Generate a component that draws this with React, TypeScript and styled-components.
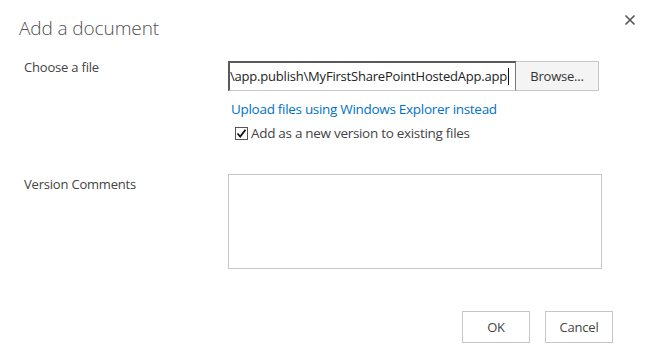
import React from "react"
import styled, { createGlobalStyle } from "styled-components"

const GlobalStyle = createGlobalStyle`
  html, body {
    margin: 0;
    padding: 0;
    background: #ffffff;
  }
  body {
    font-family: "Open Sans", "Noto Sans", "Liberation Sans", sans-serif;
    color: #444444;
  }
`

const Dialog = styled.div`
  width: 650px;
  height: 350px;
  box-sizing: border-box;
  padding: 0 37px 0 24px;
  background: #ffffff;
`

const Header = styled.div`
  display: flex;
  align-items: flex-start;
  justify-content: space-between;
  margin-right: -23px;
  padding-top: 10px;
  height: 51px;
  box-sizing: border-box;
`

const Title = styled.h1`
  margin: 5px 0 0 -5px;
  font-size: 19px;
  line-height: 26px;
  font-weight: 300;
  color: #505050;
  letter-spacing: -0.1px;
`

const CloseButton = styled.button`
  border: none;
  background: transparent;
  padding: 0;
  margin-top: 4px;
  width: 12px;
  height: 12px;
  display: flex;
  cursor: pointer;
`

const FormRow = styled.div<{ $gap?: number }>`
  display: grid;
  grid-template-columns: 204px 1fr;
  margin-top: ${p => p.$gap ?? 0}px;
`

const Label = styled.div<{ $offset?: number }>`
  font-size: 13px;
  line-height: 18px;
  color: #444444;
  padding-top: ${p => p.$offset ?? 0}px;
  letter-spacing: -0.2px;
`

const Field = styled.div`
  display: flex;
  flex-direction: column;
  align-items: flex-start;
`

const FileGroup = styled.div`
  display: flex;
  height: 30px;
  width: 371px;
  margin-top: 10px;
`

const FileBox = styled.div`
  flex: 0 0 288px;
  box-sizing: border-box;
  border-top: 2px solid #5a5a5a;
  border-left: 2px solid #5a5a5a;
  border-bottom: 1px solid #c8c8c8;
  border-right: 1px solid #7a7a7a;
  background: #ffffff;
  font-size: 13px;
  line-height: 26px;
  color: #222222;
  white-space: nowrap;
  overflow: hidden;
  letter-spacing: -0.2px;
`

const Caret = styled.span`
  display: inline-block;
  width: 1px;
  height: 17px;
  margin-left: 1px;
  background: #111111;
  vertical-align: -4px;
`

const BrowseButton = styled.button`
  flex: 1;
  box-sizing: border-box;
  border: 1px solid #c6c6c6;
  border-left: none;
  background: #f4f4f4;
  font-family: inherit;
  font-size: 13px;
  color: #333333;
  padding: 0;
  letter-spacing: -0.2px;
`

const Link = styled.a`
  margin-top: 9px;
  margin-left: 3px;
  font-size: 13.5px;
  line-height: 18px;
  color: #0072c6;
  text-decoration: none;
  letter-spacing: -0.3px;
`

const CheckRow = styled.label`
  display: flex;
  align-items: center;
  gap: 3px;
  margin-top: 6px;
  margin-left: 7px;
  font-size: 13.5px;
  line-height: 18px;
  color: #444444;
  letter-spacing: -0.3px;
`

const Box = styled.span`
  width: 13px;
  height: 13px;
  box-sizing: border-box;
  border: 1px solid #555555;
  background: #ffffff;
  display: flex;
  align-items: center;
  justify-content: center;
`

const CommentBox = styled.div`
  width: 374px;
  height: 95px;
  box-sizing: border-box;
  border: 1px solid #c6c6c6;
  background: #ffffff;
`

const Footer = styled.div`
  display: flex;
  justify-content: flex-end;
  gap: 15px;
  margin-top: 42px;
`

const ActionButton = styled.button`
  width: 68px;
  height: 32px;
  box-sizing: border-box;
  border: 1px solid #c6c6c6;
  background: #ffffff;
  font-family: inherit;
  font-size: 13px;
  color: #444444;
  padding: 0;
  letter-spacing: -0.2px;
`

const App: React.FC = () => {
  return (
    <>
      <GlobalStyle />
      <Dialog>
        <Header>
          <Title>Add a document</Title>
          <CloseButton aria-label="Close">
            <svg width="12" height="12" viewBox="0 0 12 12">
              <path d="M1.5 1.5 L10.5 10.5 M10.5 1.5 L1.5 10.5" stroke="#555" strokeWidth="1.6" />
            </svg>
          </CloseButton>
        </Header>

        <FormRow>
          <Label $offset={7}>Choose a file</Label>
          <Field>
            <FileGroup>
              <FileBox>
                \app.publish\MyFirstSharePointHostedApp.app
                <Caret />
              </FileBox>
              <BrowseButton>Browse...</BrowseButton>
            </FileGroup>
            <Link href="#">Upload files using Windows Explorer instead</Link>
            <CheckRow>
              <Box>
                <svg width="11" height="11" viewBox="0 0 11 11">
                  <path d="M1.5 5.5 L4.2 8.5 L9.5 1.8" fill="none" stroke="#111" strokeWidth="1.8" />
                </svg>
              </Box>
              Add as a new version to existing files
            </CheckRow>
          </Field>
        </FormRow>

        <FormRow $gap={32}>
          <Label $offset={1}>Version Comments</Label>
          <CommentBox />
        </FormRow>

        <Footer>
          <ActionButton>OK</ActionButton>
          <ActionButton>Cancel</ActionButton>
        </Footer>
      </Dialog>
    </>
  )
}

export default App
